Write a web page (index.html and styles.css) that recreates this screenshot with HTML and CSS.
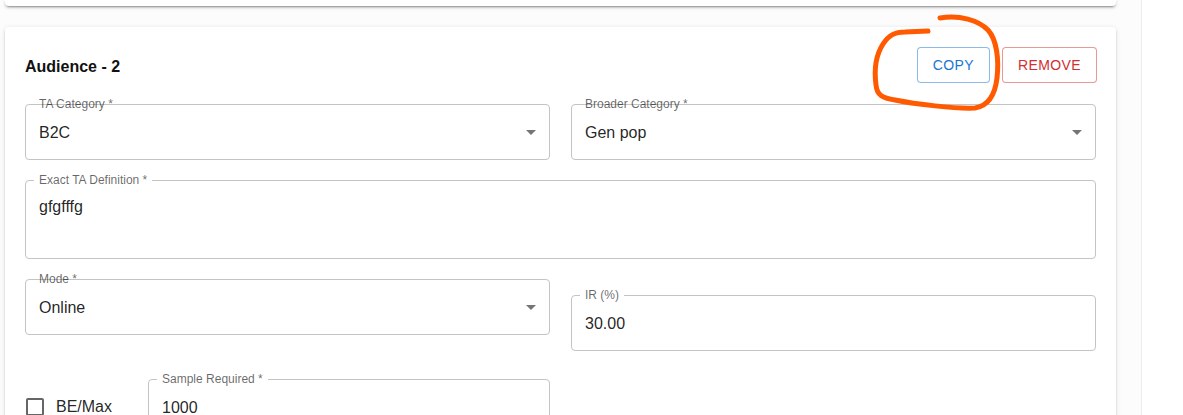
FILE: index.html
```html
<!DOCTYPE html>
<html lang="en">
<head>
<meta charset="utf-8">
<title>Audience</title>
<link rel="stylesheet" href="styles.css">
</head>
<body>
<div class="page">
  <main class="main">
    <div class="card card-top"></div>
    <section class="card card-aud">
      <div class="card-head">
        <h2 class="title">Audience - 2</h2>
        <div class="actions">
          <button class="btn btn-copy">COPY</button>
          <button class="btn btn-remove">REMOVE</button>
        </div>
      </div>
      <div class="grid">
        <div class="field select">
          <span class="label">TA Category *</span>
          <span class="value">B2C</span>
          <svg class="arrow" viewBox="0 0 24 24" width="24" height="24"><path d="M7 10l5 5 5-5z"/></svg>
        </div>
        <div class="field select">
          <span class="label">Broader Category *</span>
          <span class="value">Gen pop</span>
          <svg class="arrow" viewBox="0 0 24 24" width="24" height="24"><path d="M7 10l5 5 5-5z"/></svg>
        </div>
        <div class="field multi span2">
          <span class="label notch">Exact TA Definition *</span>
          <span class="value">gfgfffg</span>
        </div>
        <div class="field select">
          <span class="label">Mode *</span>
          <span class="value">Online</span>
          <svg class="arrow" viewBox="0 0 24 24" width="24" height="24"><path d="M7 10l5 5 5-5z"/></svg>
        </div>
        <div class="field ir">
          <span class="label notch">IR (%)</span>
          <span class="value">30.00</span>
        </div>
        <div class="row4">
          <label class="check">
            <span class="check-box"><svg viewBox="0 0 24 24" width="24" height="24"><path d="M19 5v14H5V5h14m0-2H5c-1.1 0-2 .9-2 2v14c0 1.1.9 2 2 2h14c1.1 0 2-.9 2-2V5c0-1.1-.9-2-2-2z"/></svg></span>
            <span class="check-text">BE/Max</span>
          </label>
          <div class="field sample">
            <span class="label notch">Sample Required *</span>
            <span class="value">1000</span>
          </div>
        </div>
      </div>
    </section>
  </main>
  <aside class="side"></aside>
  <svg class="annot" width="1183" height="415" viewBox="0 0 1183 415">
    <path d="M940,18 C960,15 978,20 988,30 C997,40 999,60 997,78 C995,95 988,106 975,108 C955,109 915,104 895,100 C882,98 877,95 876,85 C874,70 876,55 883,44 C889,35 895,32 905,32 L928,31" fill="none" stroke="#ff5a00" stroke-width="5" stroke-linecap="round" stroke-linejoin="round"/>
  </svg>
</div>
</body>
</html>
```
FILE: styles.css
```css
* { box-sizing: border-box; }
html, body {
  margin: 0;
  height: 100%;
  overflow: hidden;
  background: #fcfcfc;
  font-family: "Liberation Sans", Arial, sans-serif;
  color: rgba(0,0,0,0.87);
}
.page {
  position: relative;
  display: flex;
  height: 415px;
}
.main {
  margin-left: 5px;
  width: 1111px;
  flex: none;
}
.card {
  background: #fff;
  border-radius: 4px;
  box-shadow: 0px 3px 1px -2px rgba(0,0,0,0.2), 0px 2px 2px 0px rgba(0,0,0,0.14), 0px 1px 5px 0px rgba(0,0,0,0.12);
}
.card-top {
  height: 6px;
  border-radius: 0 0 4px 4px;
}
.card-aud {
  margin-top: 21px;
  padding: 20px 20px 40px 20px;
}
.card-head {
  display: flex;
  align-items: center;
  justify-content: space-between;
  height: 36px;
}
.title {
  margin: 3px 0 0 0;
  font-size: 16px;
  font-weight: 700;
  color: #111;
}
.actions {
  display: flex;
  gap: 12px;
  margin-right: -1px;
}
.btn {
  height: 36px;
  padding: 0 15px;
  background: #fff;
  border-radius: 4px;
  font-family: "Liberation Sans", Arial, sans-serif;
  font-size: 14px;
  letter-spacing: 0.4px;
  line-height: 1;
}
.btn-copy {
  color: #1976d2;
  border: 1px solid rgba(25,118,210,0.5);
}
.btn-remove {
  color: #d32f2f;
  border: 1px solid rgba(211,47,47,0.5);
}
.grid {
  margin-top: 21px;
  display: grid;
  grid-template-columns: 525px 525px;
  column-gap: 21px;
  row-gap: 20px;
  align-items: start;
}
.field {
  position: relative;
  height: 56px;
  border: 1px solid #c4c4c4;
  border-radius: 4px;
  padding: 0 13px;
  display: flex;
  align-items: center;
}
.span2 { grid-column: 1 / 3; }
.multi {
  height: 79px;
  align-items: flex-start;
  padding-top: 14px;
}
.ir { margin-top: 16px; }
.label {
  position: absolute;
  left: 13px;
  top: -7px;
  font-size: 12px;
  line-height: 12px;
  color: rgba(0,0,0,0.6);
  white-space: nowrap;
}
.label.notch {
  left: 8px;
  padding: 0 5px;
  background: #fff;
}
.value {
  font-size: 16px;
  line-height: 23px;
  color: rgba(0,0,0,0.87);
}
.arrow {
  position: absolute;
  right: 6px;
  top: 15px;
  fill: rgba(0,0,0,0.54);
}
.row4 {
  grid-column: 1 / 2;
  margin-top: 8px;
  display: flex;
  align-items: center;
}
.check {
  display: flex;
  align-items: center;
  margin-left: -11px;
}
.check-box {
  display: flex;
  padding: 9px;
}
.check-box svg { fill: rgba(0,0,0,0.6); }
.check-text {
  font-size: 16px;
  line-height: 24px;
}
.sample {
  flex: 1;
  margin-left: 36px;
}
.side {
  margin-left: 25px;
  flex: 1;
  background: #fff;
  border-left: 1px solid #ececec;
}
.annot {
  position: absolute;
  left: 0;
  top: 0;
  pointer-events: none;
}
```
